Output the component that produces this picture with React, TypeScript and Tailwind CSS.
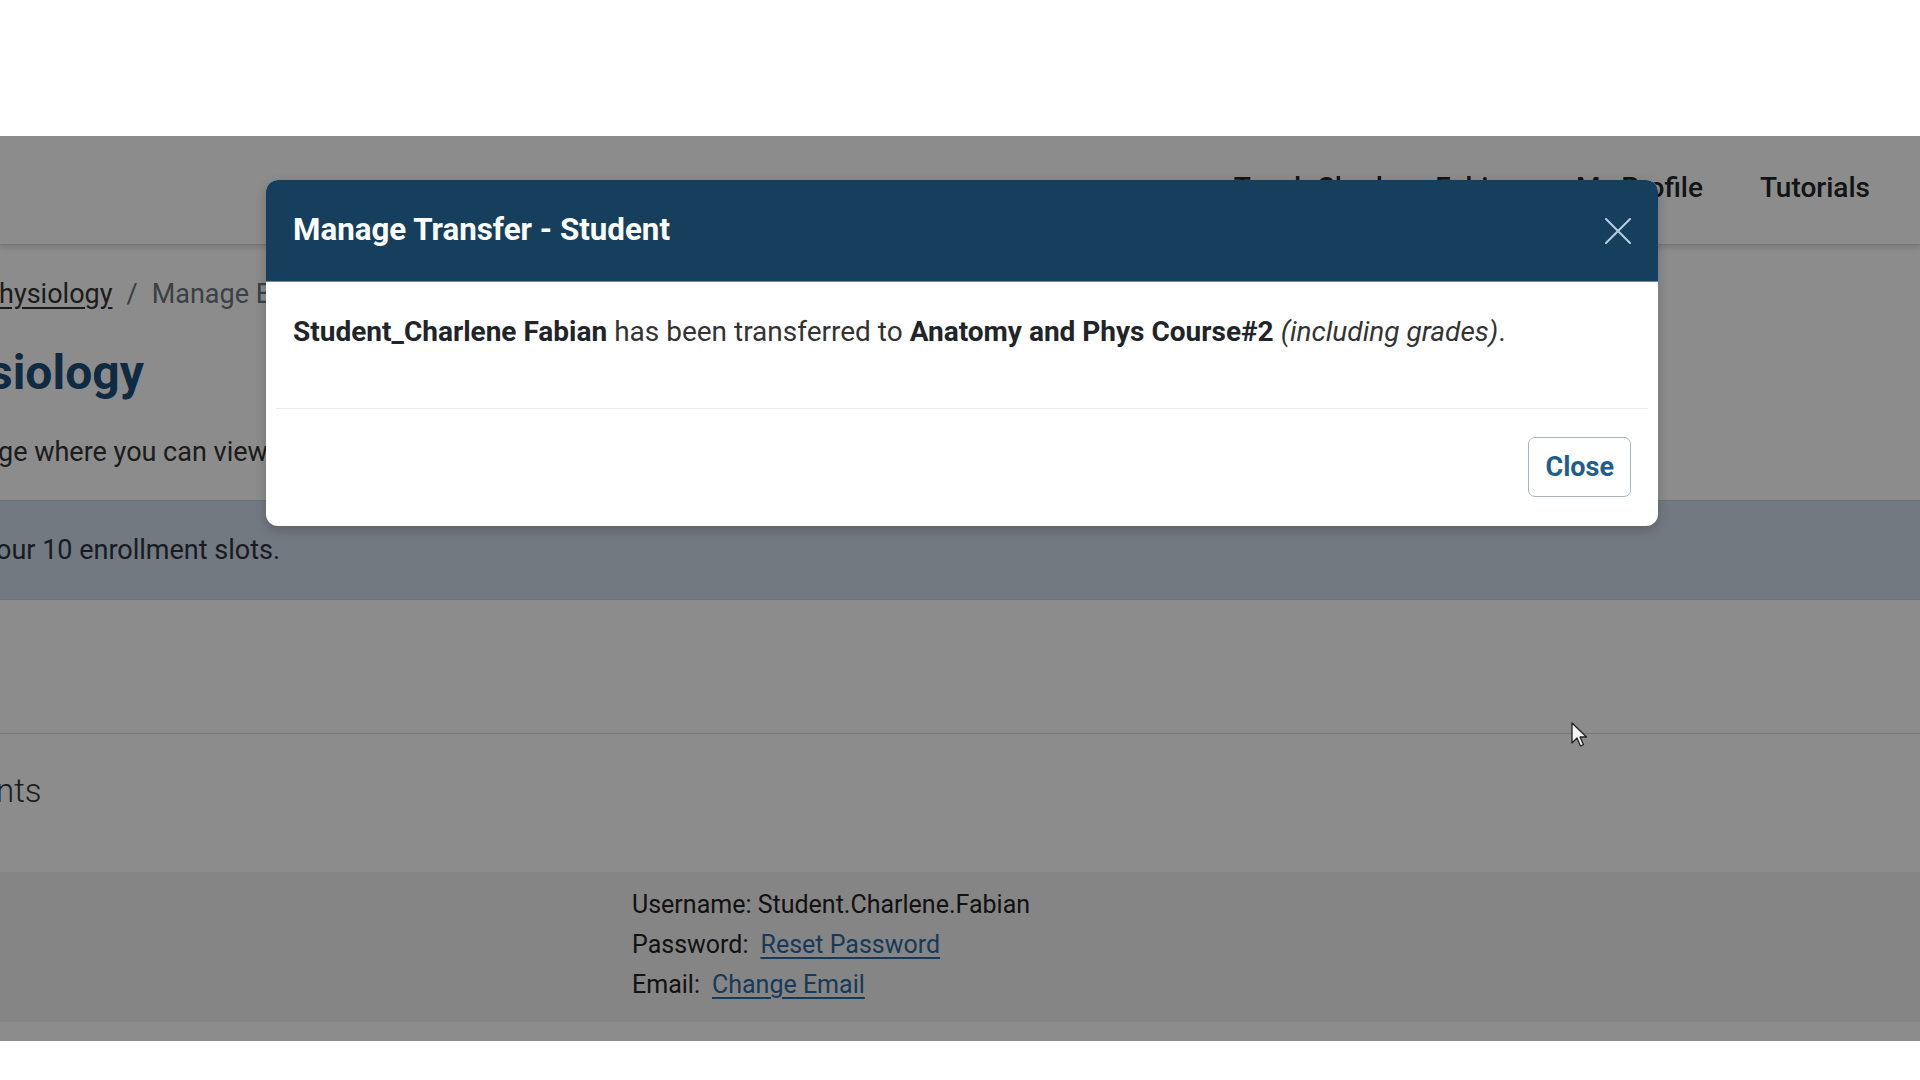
export default function App() {
  return (
    <div className="w-[1920px] h-[1080px] bg-white overflow-hidden font-['Roboto',sans-serif]">
      <div className="h-[136px] bg-white" />

      {/* page under the modal */}
      <div className="relative h-[905px] overflow-hidden bg-white text-[#212529]">
        <header className="h-[109px] flex items-center justify-end gap-[57px] pr-[50px] pb-[4px] border-b border-[#d4d4d4] shadow-[0_3px_5px_rgba(0,0,0,0.12)] text-[28px] font-medium">
          <span>Teach Charlene Fabian</span>
          <span>My Profile</span>
          <span>Tutorials</span>
        </header>

        <div className="pt-[29px]">
          <div className="h-[40px] flex items-center text-[27px] text-[#6c757d] -ml-[18px]">
            <span className="text-[#333] underline underline-offset-4">Physiology</span>
            <span className="mx-[14px]">/</span>
            <span>Manage Enrollment</span>
          </div>
          <h1 className="mt-[30px] h-[58px] leading-[58px] text-[48px] font-bold text-[#1d4f7c] -ml-[94px]">Physiology</h1>
          <p className="mt-[30px] h-[40px] leading-[40px] text-[27px] text-[#333] -ml-[2px]">ge where you can view and manage the students in this course.</p>
        </div>

        <div className="mt-[28px] h-[100px] flex items-center bg-[#d1dce9] border-y border-[#c4d2e2] text-[27px] text-[#2b3440]">
          <span className="-ml-[4px]">our 10 enrollment slots.</span>
        </div>

        <div className="mt-[133px] h-px bg-[#dcdcdc]" />

        <div className="mt-[37px] h-[40px] leading-[40px] text-[33px] font-light text-[#333] -ml-[4px]">nts</div>

        <div className="mt-[61px] h-[150px] bg-[#f3f2f4] pt-[13px] pl-[632px] text-[25px] text-[#222]">
          <div className="h-[40px] leading-[40px]">Username: Student.Charlene.Fabian</div>
          <div className="h-[40px] leading-[40px] flex gap-[12px]">
            <span>Password:</span>
            <span className="text-[#2d6a9f] underline underline-offset-4">Reset Password</span>
          </div>
          <div className="h-[40px] leading-[40px] flex gap-[12px]">
            <span>Email:</span>
            <span className="text-[#2d6a9f] underline underline-offset-4">Change Email</span>
          </div>
        </div>

        {/* backdrop + modal */}
        <div className="absolute inset-0 bg-black/45 flex justify-center items-start pt-[44px] pl-[4px]">
          <div className="w-[1392px] bg-white rounded-[12px] shadow-[0_4px_12px_rgba(0,0,0,0.2)]">
            <div className="h-[102px] bg-[#153f5d] rounded-t-[12px] border-b border-[#5a90b3] flex items-center justify-between px-[27px]">
              <h2 className="text-[31.3px] font-bold text-white">Manage Transfer - Student</h2>
              <svg width="26" height="26" viewBox="0 0 26 26" className="shrink-0">
                <path d="M1 1 L25 25 M25 1 L1 25" stroke="#b9cfe1" strokeWidth="2" strokeLinecap="round" />
              </svg>
            </div>
            <div className="px-[27px] pt-[30px] pb-[56px]">
              <p className="h-[40px] leading-[40px] text-[28px] text-[#333]">
                <span className="font-bold text-[#212529]">Student_Charlene Fabian</span> has been transferred to{' '}
                <span className="font-bold text-[#212529]">Anatomy and Phys Course#2</span> <em>(including grades)</em>.
              </p>
            </div>
            <div className="mx-[10px] h-px bg-[#ececec]" />
            <div className="flex justify-end pt-[28px] pb-[29px] pr-[27px]">
              <button className="h-[60px] px-[16px] rounded-[7px] border border-[#a9b4bf] bg-white text-[27px] font-bold text-[#1f5e8c]">
                Close
              </button>
            </div>
          </div>
        </div>

        {/* mouse pointer */}
        <svg className="absolute left-[1571px] top-[586px]" width="17" height="27" viewBox="0 0 17 27">
          <path d="M1 1 L1 21 L6 16 L9.5 24 L12.5 22.7 L9 15 L15.5 15 Z" fill="#f4f4f4" stroke="#222" strokeWidth="1.3" strokeLinejoin="round" />
        </svg>
      </div>
    </div>
  );
}
